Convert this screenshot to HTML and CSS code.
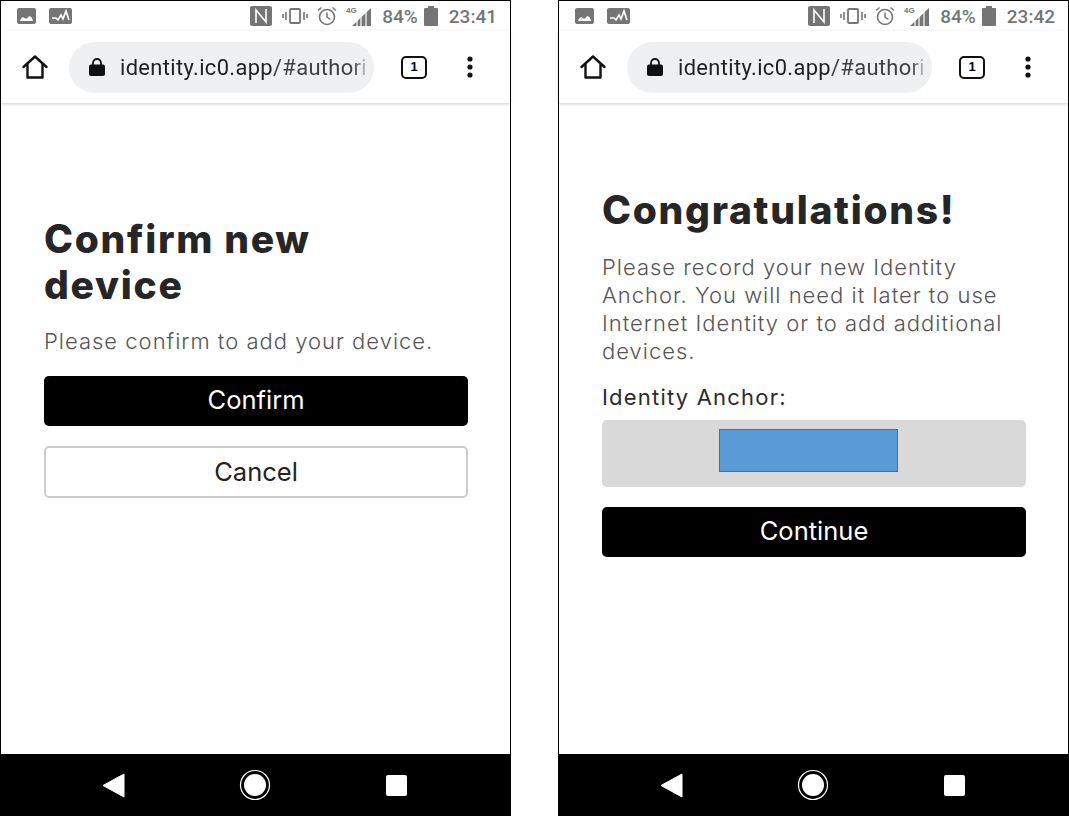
FILE: index.html
```html
<!DOCTYPE html>
<html lang="en">
<head>
    <meta charset="UTF-8">
    <title>Add device</title>
    <link rel="stylesheet" href="styles.css">
</head>
<body>
<svg class="sprite" width="0" height="0">
    <symbol id="i-image" viewBox="0 0 19 16"><rect width="19" height="16" rx="2" fill="#757575"/><path d="M3 13c1-3 3-5 4.500-3 1 1 2 1 3 0 1.500-3 4.500-2 5.500 3z" fill="#fff"/></symbol>
    <symbol id="i-pulse" viewBox="0 0 23 16"><rect width="23" height="16" rx="2" fill="#757575"/><path d="M3 10h4l2 2 3-5 2 4 3-8 3 9" fill="none" stroke="#fff" stroke-width="1.700"/></symbol>
    <symbol id="i-nfc" viewBox="0 0 22 20"><rect width="22" height="20" rx="2" fill="#757575"/><path d="M6 17V4l10 12V3" fill="none" stroke="#fff" stroke-width="1.600"/></symbol>
    <symbol id="i-vibrate" viewBox="0 0 26 18"><rect x="8" y="2" width="10" height="14" rx="1" fill="none" stroke="#757575" stroke-width="1.800"/><path d="M4 5v8M1 7v4M22 5v8M25 7v4" stroke="#757575" stroke-width="1.600"/></symbol>
    <symbol id="i-alarm" viewBox="0 0 20 20"><circle cx="10" cy="11" r="7.500" fill="none" stroke="#757575" stroke-width="1.600"/><path d="M10 6.500V11l3.500 2.500M1 4.500l3.500-3M19 4.500l-3.500-3" fill="none" stroke="#757575" stroke-width="1.500"/></symbol>
    <symbol id="i-signal" viewBox="0 0 26 22"><path d="M25 3v18H6z" fill="#757575"/><path d="M11 14v7M15 11v10M20 7v14" stroke="#fff" stroke-width="1.200"/><text x="0" y="8" class="net">4G</text></symbol>
    <symbol id="i-battery" viewBox="0 0 14 20"><path d="M4 0h6v2h3a1 1 0 0 1 1 1v16a1 1 0 0 1-1 1H1a1 1 0 0 1-1-1V3a1 1 0 0 1 1-1h3z" fill="#757575"/></symbol>
    <symbol id="i-home" viewBox="0 0 26 24"><path d="M1.500 12L13 1.500 24.500 12M5.500 9v13.500h15V9" fill="none" stroke="#111" stroke-width="2.400" stroke-linejoin="round" stroke-linecap="round"/></symbol>
    <symbol id="i-lock" viewBox="0 0 16 18"><path d="M4 7V5a4 4 0 0 1 8 0v2" fill="none" stroke="#111" stroke-width="1.800"/><rect y="6.500" width="16" height="11.500" rx="2" fill="#111"/></symbol>
    <symbol id="i-more" viewBox="0 0 6 22"><circle cx="3" cy="3" r="2.600" fill="#111"/><circle cx="3" cy="11" r="2.600" fill="#111"/><circle cx="3" cy="19" r="2.600" fill="#111"/></symbol>
    <symbol id="i-back" viewBox="0 0 23 25"><path d="M22 1v23L1 12.500z" fill="#fff" stroke="#fff" stroke-width="1" stroke-linejoin="round"/></symbol>
    <symbol id="i-circle" viewBox="0 0 32 32"><circle cx="16" cy="16" r="14.500" fill="none" stroke="#fff" stroke-width="1.200"/><circle cx="16" cy="16" r="11" fill="#fff"/></symbol>
</svg>

<!-- First phone -->
<section class="phone">
    <div class="status-bar">
        <div class="status-left">
            <svg class="ic-image"><use href="#i-image"/></svg>
            <svg class="ic-pulse"><use href="#i-pulse"/></svg>
        </div>
        <div class="status-right">
            <svg class="ic-nfc"><use href="#i-nfc"/></svg>
            <svg class="ic-vibrate"><use href="#i-vibrate"/></svg>
            <svg class="ic-alarm"><use href="#i-alarm"/></svg>
            <svg class="ic-signal"><use href="#i-signal"/></svg>
            <span class="battery-text">84%</span>
            <svg class="ic-battery"><use href="#i-battery"/></svg>
            <span class="clock">23:41</span>
        </div>
    </div>
    <div class="toolbar">
        <svg class="ic-home"><use href="#i-home"/></svg>
        <div class="omnibox">
            <svg class="ic-lock"><use href="#i-lock"/></svg>
            <span class="url">identity.ic0.app<span class="url-path">/#authori</span></span>
        </div>
        <div class="tab-count">1</div>
        <svg class="ic-more"><use href="#i-more"/></svg>
    </div>
    <main class="page page-confirm">
        <h1>Confirm new device</h1>
        <p class="lead">Please confirm to add your device.</p>
        <button class="btn btn-primary">Confirm</button>
        <button class="btn btn-outline">Cancel</button>
    </main>
    <div class="nav-bar">
        <svg class="ic-back"><use href="#i-back"/></svg>
        <svg class="ic-circle"><use href="#i-circle"/></svg>
        <div class="nav-square"></div>
    </div>
</section>

<!-- Second phone -->
<section class="phone">
    <div class="status-bar">
        <div class="status-left">
            <svg class="ic-image"><use href="#i-image"/></svg>
            <svg class="ic-pulse"><use href="#i-pulse"/></svg>
        </div>
        <div class="status-right">
            <svg class="ic-nfc"><use href="#i-nfc"/></svg>
            <svg class="ic-vibrate"><use href="#i-vibrate"/></svg>
            <svg class="ic-alarm"><use href="#i-alarm"/></svg>
            <svg class="ic-signal"><use href="#i-signal"/></svg>
            <span class="battery-text">84%</span>
            <svg class="ic-battery"><use href="#i-battery"/></svg>
            <span class="clock">23:42</span>
        </div>
    </div>
    <div class="toolbar">
        <svg class="ic-home"><use href="#i-home"/></svg>
        <div class="omnibox">
            <svg class="ic-lock"><use href="#i-lock"/></svg>
            <span class="url">identity.ic0.app<span class="url-path">/#authori</span></span>
        </div>
        <div class="tab-count">1</div>
        <svg class="ic-more"><use href="#i-more"/></svg>
    </div>
    <main class="page page-done">
        <h1>Congratulations!</h1>
        <p class="lead">Please record your new Identity Anchor. You will need it later to use Internet Identity or to add additional devices.</p>
        <div class="anchor-label">Identity Anchor:</div>
        <div class="anchor-box"><div class="anchor-mask"></div></div>
        <button class="btn btn-primary">Continue</button>
    </main>
    <div class="nav-bar">
        <svg class="ic-back"><use href="#i-back"/></svg>
        <svg class="ic-circle"><use href="#i-circle"/></svg>
        <div class="nav-square"></div>
    </div>
</section>
</body>
</html>
```

FILE: styles.css
```css
html, body {
    margin: 0;
    height: 816px;
    overflow: hidden;
}

body {
    display: flex;
    justify-content: space-between;
    background-color: #fff;
    font-family: Inter, sans-serif;
}

.sprite {
    display: none;
}

.net {
    font-family: "Liberation Sans", sans-serif;
    font-size: 8px;
    font-weight: 700;
    fill: #757575;
}

.phone {
    box-sizing: border-box;
    width: 511px;
    height: 816px;
    display: flex;
    flex-direction: column;
    border: 1px solid #000;
    border-bottom: none;
}

.status-bar {
    height: 30px;
    flex: none;
    display: flex;
    justify-content: space-between;
    align-items: center;
    padding: 0 13px 0 16px;
}

.status-left, .status-right {
    display: flex;
    align-items: center;
}

.ic-image { width: 19px; height: 16px; }
.ic-pulse { width: 23px; height: 16px; margin-left: 13px; }
.ic-nfc { width: 22px; height: 20px; }
.ic-vibrate { width: 26px; height: 18px; margin-left: 10px; }
.ic-alarm { width: 20px; height: 20px; margin-left: 9px; }
.ic-signal { width: 26px; height: 22px; margin-left: 9px; }
.ic-battery { width: 14px; height: 20px; margin-left: 6px; }

.battery-text, .clock {
    font-family: Roboto, sans-serif;
    font-size: 19px;
    font-weight: 500;
    color: #757575;
}

.battery-text { margin-left: 10px; }
.clock { margin-left: 11px; }

.toolbar {
    height: 72px;
    flex: none;
    display: flex;
    align-items: center;
    padding: 0 0 0 21px;
    box-shadow: 0 1px 3px rgba(0, 0, 0, 0.2);
    position: relative;
}

.ic-home { width: 26px; height: 24px; }

.omnibox {
    box-sizing: border-box;
    width: 305px;
    height: 51px;
    margin-left: 21px;
    padding-left: 20px;
    display: flex;
    align-items: center;
    background-color: #eff0f2;
    border-radius: 26px;
}

.ic-lock { width: 16px; height: 18px; flex: none; }

.url {
    margin-left: 15px;
    font-family: Roboto, sans-serif;
    font-size: 21.9px;
    letter-spacing: 0.35px;
    color: #1f1f1f;
    white-space: nowrap;
    -webkit-mask-image: linear-gradient(to right, #000 94%, rgba(0, 0, 0, 0.2) 100%);
    mask-image: linear-gradient(to right, #000 94%, rgba(0, 0, 0, 0.2) 100%);
}

.url-path {
    color: #3c3f43;
}

.tab-count {
    box-sizing: border-box;
    width: 26px;
    height: 23px;
    margin-left: 27px;
    border: 2.5px solid #111;
    border-radius: 5px;
    font-family: "Liberation Sans", sans-serif;
    font-size: 13px;
    font-weight: 700;
    line-height: 18px;
    text-align: center;
}

.ic-more { width: 6px; height: 22px; margin-left: 40px; }

.page {
    flex: 1;
    padding: 0 42px 0 43px;
}

.page-confirm { padding-top: 113px; }
.page-done { padding-top: 84px; }

h1 {
    margin: 0;
    font-family: Inter, sans-serif;
    font-size: 39px;
    font-weight: 800;
    line-height: 46px;
    letter-spacing: 1.7px;
    color: #262626;
}

.page-confirm h1 {
    max-width: 340px;
}

.lead {
    margin: 0;
    font-family: Inter, sans-serif;
    font-size: 22px;
    font-weight: 300;
    letter-spacing: 1px;
    line-height: 28px;
    color: #555;
}

.page-confirm .lead { margin-top: 19px; }
.page-done .lead { margin-top: 20px; }

.btn {
    display: block;
    box-sizing: border-box;
    width: 100%;
    height: 50px;
    border-radius: 5px;
    font-family: Inter, sans-serif;
    font-size: 25.5px;
    line-height: 46px;
    padding-bottom: 4px;
    cursor: pointer;
}

.btn-primary {
    background-color: #000;
    color: #fff;
    border: none;
}

.btn-outline {
    height: 52px;
    margin-top: 20px;
    background-color: #fff;
    color: #222;
    border: 2px solid #ccc;
}

.page-confirm .btn-primary { margin-top: 21px; }
.page-done .btn-primary { margin-top: 20px; }

.anchor-label {
    margin-top: 18px;
    font-family: Inter, sans-serif;
    font-size: 22px;
    letter-spacing: 1.2px;
    line-height: 28px;
    color: #2b2b2b;
}

.anchor-box {
    height: 67px;
    margin-top: 9px;
    background-color: #d9d9d9;
    border-radius: 5px;
    display: flex;
    justify-content: center;
    align-items: center;
}

.anchor-mask {
    box-sizing: border-box;
    width: 179px;
    height: 43px;
    background-color: #5b9bd5;
    border: 1px solid #41719c;
    margin-right: 11px;
    margin-bottom: 7px;
}

.nav-bar {
    height: 62px;
    flex: none;
    background-color: #000;
    margin: 0 -1px;
    display: flex;
    align-items: center;
    padding-left: 102px;
}

.ic-back { width: 23px; height: 25px; }
.ic-circle { width: 32px; height: 32px; margin-left: 114px; }

.nav-square {
    width: 21px;
    height: 21px;
    margin-left: 115px;
    background-color: #fff;
    border-radius: 2px;
}
```
